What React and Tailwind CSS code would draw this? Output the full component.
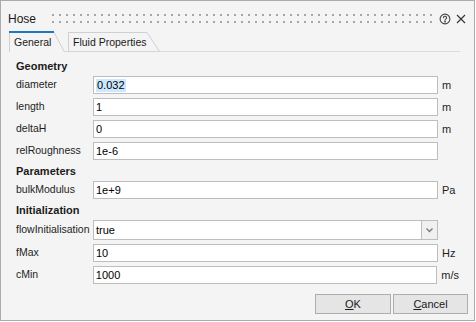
import React from "react";

const font = "font-['Liberation_Sans',Arial,sans-serif]";

function Heading({ children, className = "" }) {
  return (
    <div className={`flex h-[18px] items-center text-[11px] font-bold text-[#1b1b1b] ${className}`}>
      {children}
    </div>
  );
}

function Field({ label, value, unit, selected }) {
  return (
    <div className="mb-[4px] flex h-[18px] items-center">
      <div className="w-[77px] text-[10.5px] text-[#1e1e1e]">{label}</div>
      <div className="flex h-[18px] w-[345px] items-center border border-[#bdbdbd] bg-white pl-[2px] text-[11px] text-black">
        {selected ? <span className="bg-[#cce8ff] px-[1px] leading-[13px]">{value}</span> : <span>{value}</span>}
      </div>
      {unit && <span className="ml-[4px] text-[11px] text-[#1e1e1e]">{unit}</span>}
    </div>
  );
}

export default function App() {
  return (
    <div className={`h-[322px] w-[476px] bg-white ${font}`}>
      <div className="flex h-[321px] w-[475px] flex-col border border-[#ababab] bg-[#f4f4f4]">
        {/* title bar */}
        <div className="flex h-[30px] items-start pl-[7px] pt-[11px]">
          <span className="text-[12px] leading-[14px] text-[#1a1a1a]">Hose</span>
          <svg className="ml-[15px]" width="381" height="14">
            <defs>
              <pattern id="grip" width="7" height="7" patternUnits="userSpaceOnUse">
                <rect x="1" y="2" width="2" height="2" fill="#a6a6a6" />
              </pattern>
            </defs>
            <rect width="381" height="14" fill="url(#grip)" />
          </svg>
          <svg className="ml-[7px] mt-[1px]" width="12" height="12" viewBox="0 0 12 12" fill="none" stroke="#444" strokeWidth="1.1">
            <circle cx="6" cy="6" r="4.9" />
            <path d="M4.4 4.7a1.6 1.5 0 1 1 2.3 1.4c-.5.3-.7.6-.7 1.1" strokeLinecap="round" />
            <circle cx="6" cy="8.7" r=".35" fill="#444" />
          </svg>
          <svg className="ml-[5px] mt-[2px]" width="10" height="10" viewBox="0 0 10 10" stroke="#333" strokeWidth="1.1">
            <path d="M1 1 9 9M9 1 1 9" />
          </svg>
        </div>

        {/* tabs */}
        <div className="flex h-[21px] items-end pl-[8px] pr-[14px]">
          <div className="relative h-[21px] w-[56px] pl-[5px] pt-[5px] text-[10.5px] leading-[12px]">
            <svg className="absolute left-0 top-0" width="56" height="21">
              <path d="M0.5 21V0.5H44.5L55.5 21" fill="none" stroke="#cfcfcf" />
              <path d="M0 1H45" stroke="#1c79c0" strokeWidth="2" />
            </svg>
            <span className="relative block text-[#1a1a1a]">General</span>
          </div>
          <div className="h-[21px] w-[3px] border-b border-[#d6d6d6]" />
          <div className="relative h-[20px] w-[92px] pl-[5px] pt-[4px] text-[10.5px] leading-[12px]">
            <svg className="absolute left-0 top-0" width="92" height="20">
              <path d="M0.5 20V0.5H79L91.5 19.5" fill="none" stroke="#cfcfcf" />
              <path d="M0 19.5H92" stroke="#d6d6d6" />
            </svg>
            <span className="relative block text-[#1a1a1a]">Fluid Properties</span>
          </div>
          <div className="h-[20px] flex-1 border-b border-[#dcdcdc]" />
        </div>

        {/* content */}
        <div className="px-[15px] pt-[5px]">
          <Heading className="mb-[1px]">Geometry</Heading>
          <Field label="diameter" value="0.032" unit="m" selected />
          <Field label="length" value="1" unit="m" />
          <Field label="deltaH" value="0" unit="m" />
          <Field label="relRoughness" value="1e-6" />
          <Heading className="-mt-[2px] mb-[1px]">Parameters</Heading>
          <Field label="bulkModulus" value="1e+9" unit="Pa" />
          <Heading className="-mt-[2px] mb-[1px]">Initialization</Heading>
          <div className="mb-[4px] flex h-[20px] items-center">
            <div className="w-[77px] text-[10.5px] text-[#1e1e1e]">flowInitialisation</div>
            <div className="flex h-[20px] w-[345px]">
              <div className="flex flex-1 items-center border border-[#bdbdbd] bg-white pl-[2px] text-[11px] text-black">
                true
              </div>
              <div className="flex w-[16px] items-center justify-center border border-l-0 border-[#bdbdbd] bg-[#f0f0f0]">
                <svg width="7" height="5" viewBox="0 0 7 5">
                  <path d="M0.5 0.5 3.5 3.5 6.5 0.5" fill="none" stroke="#7a7a7a" strokeWidth="1.4" />
                </svg>
              </div>
            </div>
          </div>
          <Field label="fMax" value="10" unit="Hz" />
          <Field label="cMin" value="1000" unit="m/s" />
        </div>

        {/* buttons */}
        <div className="mt-[6px] flex justify-end gap-[2px] pr-[6px]">
          <button className="h-[20px] w-[76px] border border-[#adadad] bg-[#e5e5e5] text-[11px] text-[#1a1a1a]">
            <span className="underline">O</span>K
          </button>
          <button className="h-[20px] w-[75px] border border-[#adadad] bg-[#e5e5e5] text-[11px] text-[#1a1a1a]">
            <span className="underline">C</span>ancel
          </button>
        </div>
      </div>
    </div>
  );
}
